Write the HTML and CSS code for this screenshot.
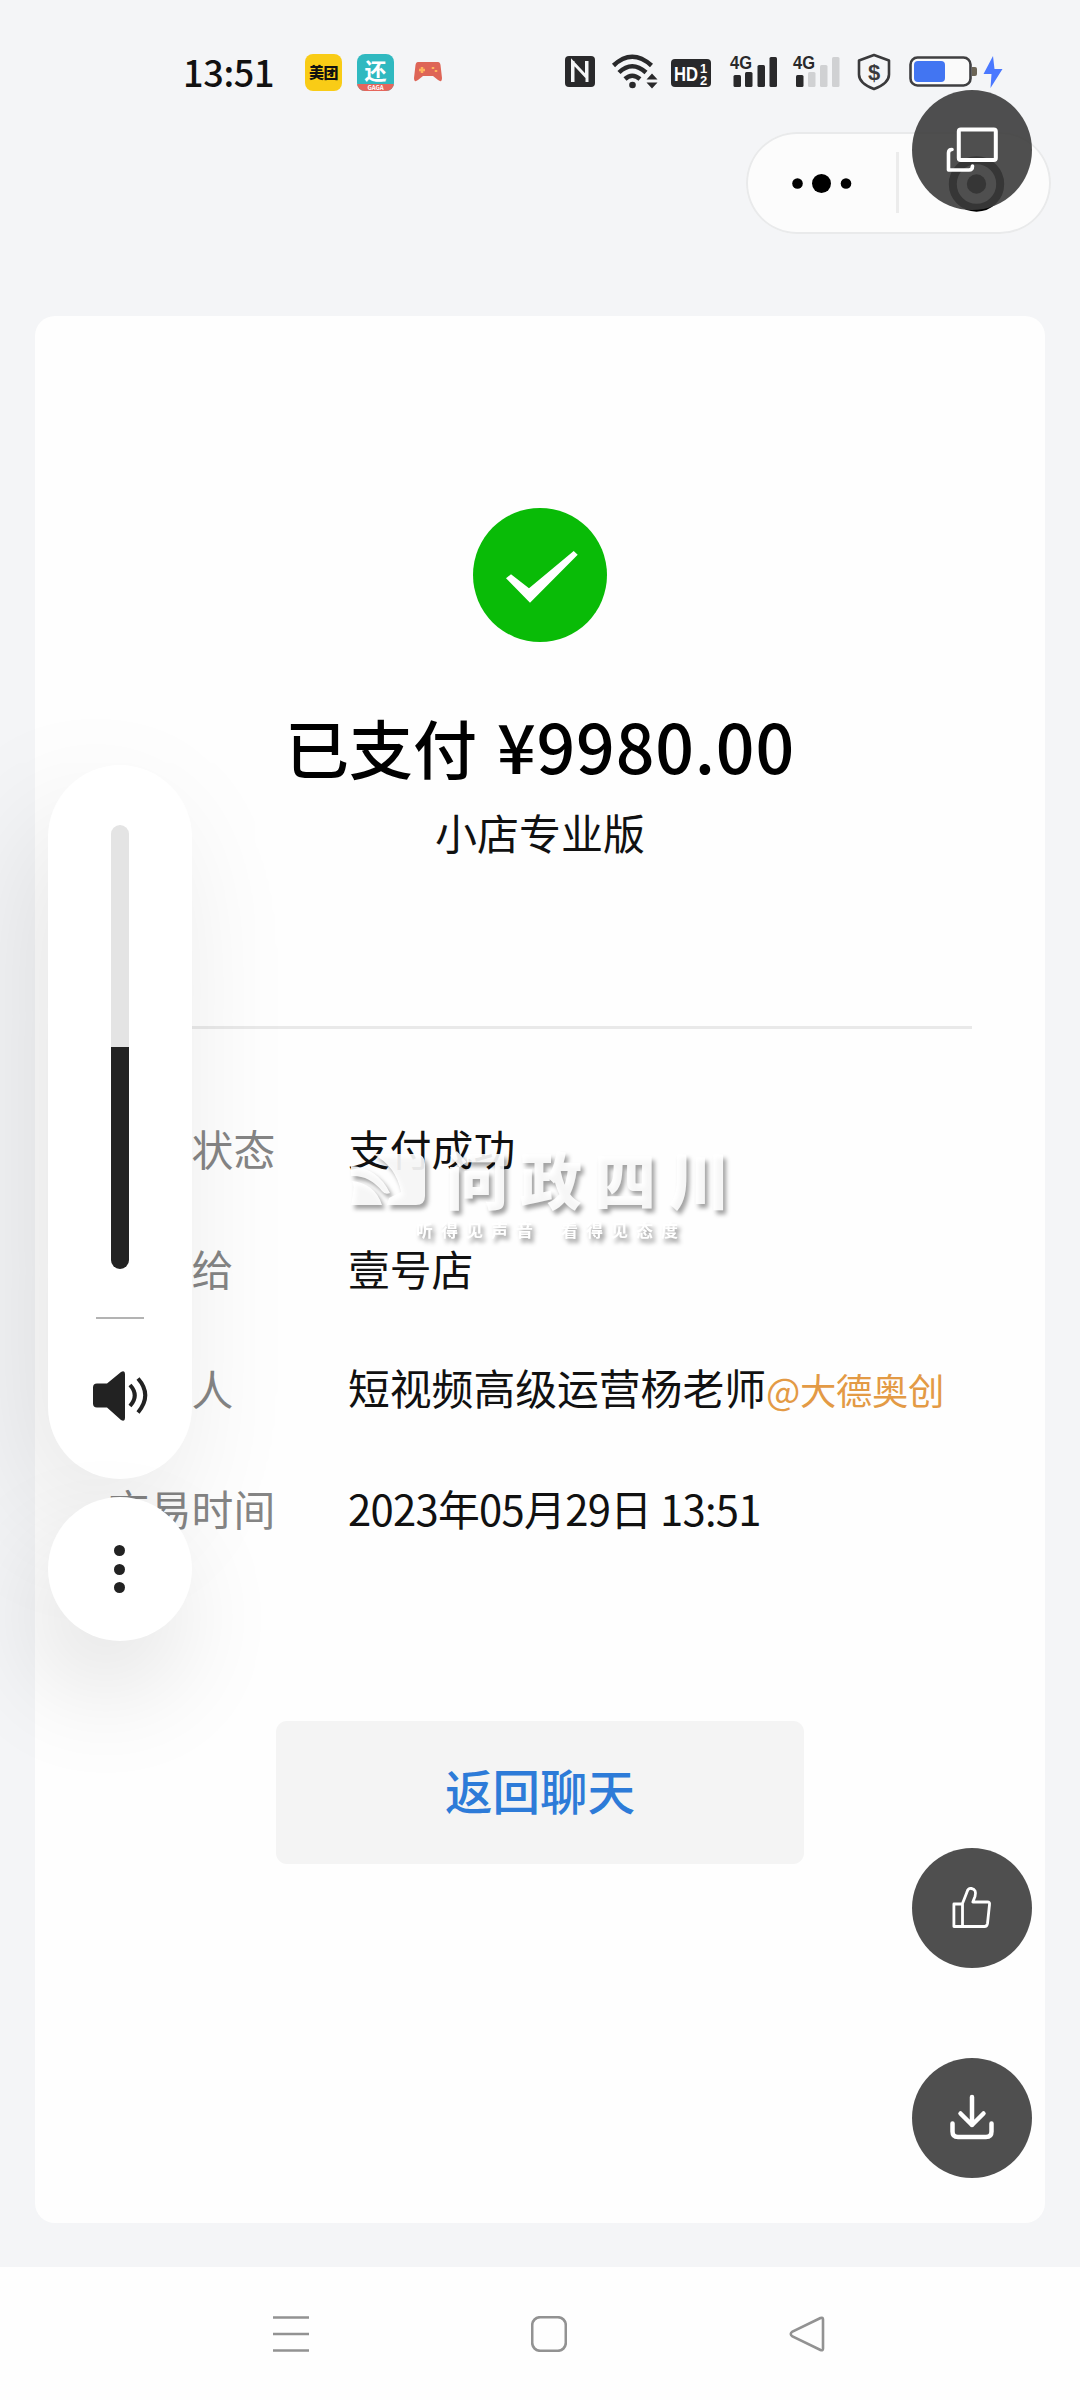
FILE: index.html
```html
<!DOCTYPE html>
<html lang="zh-CN">
<head>
<meta charset="utf-8">
<title>支付详情</title>
<link rel="stylesheet" href="styles.css">
</head>
<body>
<div class="screen">
  <header class="status">
    <span class="clock">13:51</span>
    <div class="apps">
      <span class="app app-yellow">美团</span>
      <span class="app app-teal"><b>还</b><i>GAGA</i></span>
      <svg class="pad" width="28" height="20" viewBox="0 0 28 20"><path d="M4 0h20q2 0 2.500 3L28 16q0 5-4 2l-5-4H9l-5 4q-4 3-4-2L1.500 3Q2 0 4 0Z" fill="#de6557"/><path d="M8 5v6M5 8h6M19 5v2M22 8v2" stroke="#ffb35c" stroke-width="2.500"/></svg>
    </div>
    <div class="sys">
      <svg width="440" height="40" viewBox="564 52 440 40">
        <rect x="565" y="56" width="30" height="31" rx="4" fill="#29292b"/>
        <path d="M572.500 82V62l14 15V61M587 82V61M573 82V61" fill="none" stroke="#f4f5f7" stroke-width="3"/>
        <g fill="none" stroke="#29292b" stroke-width="4.500"><path d="M613.500 65.500Q632 48 651.500 65.500"/><path d="M619 72.500Q632 60 646 72.500"/><path d="M625 79Q632 72.500 640 79"/></g>
        <circle cx="632.500" cy="85" r="3.300" fill="#29292b"/>
        <path d="M646.500 79.500l5.500-6 5.500 6zM646.500 82.500l5.500 6 5.500-6z" fill="#29292b"/>
        <rect x="671" y="59" width="40" height="28" rx="4" fill="#29292b"/>
        <text x="674" y="80.500" class="hd" textLength="24" lengthAdjust="spacingAndGlyphs">HD</text>
        <text x="700" y="72.500" class="hd-n">1</text><text x="700" y="84.500" class="hd-n">2</text>
        <text x="730" y="69" class="net" textLength="22" lengthAdjust="spacingAndGlyphs">4G</text>
        <g fill="#29292b"><rect x="733.500" y="75" width="7.500" height="12" rx="1.500"/><rect x="745" y="72" width="7.500" height="15" rx="1.500"/><rect x="757.500" y="65" width="7.500" height="22" rx="1.500"/><rect x="769.500" y="57" width="7.500" height="30" rx="1.500"/></g>
        <text x="793" y="69" class="net" textLength="22" lengthAdjust="spacingAndGlyphs">4G</text>
        <rect x="796" y="75" width="7.500" height="12" rx="1.500" fill="#29292b"/>
        <g fill="#d0d1d3"><rect x="808" y="72" width="7.500" height="15" rx="1.500"/><rect x="820" y="65" width="7.500" height="22" rx="1.500"/><rect x="832" y="57" width="7.500" height="30" rx="1.500"/></g>
        <path d="M874 55l15 5.500v14q0 9-15 14.500q-15-5.500-15-14.500v-14z" fill="none" stroke="#3a3a3c" stroke-width="2.600" stroke-linejoin="round"/>
        <text x="874" y="80" class="dollar" text-anchor="middle">$</text>
        <rect x="910.500" y="57.500" width="60" height="28" rx="7" fill="#fafafa" stroke="#3f3f41" stroke-width="2.600"/>
        <rect x="914" y="61" width="31" height="21" rx="4" fill="#4275f2"/>
        <path d="M972 67h3q2 0 2 2v5q0 2-2 2h-3z" fill="#6b6455"/>
        <path d="M993 56l-9.500 18h8l-1 14 12-19h-8z" fill="#4a78ff"/>
      </svg>
    </div>
  </header>
  <div class="topbar">
    <div class="capsule">
      <svg width="305" height="101" viewBox="746 132 305 101"><circle cx="797.500" cy="183.500" r="5.300"/><circle cx="821.500" cy="183.500" r="9.500"/><circle cx="846" cy="183.500" r="5.300"/><path d="M897.500 152v61" stroke="#ececec" stroke-width="3"/><circle cx="976.500" cy="184" r="23.700" fill="none" stroke="#000" stroke-width="8"/><circle cx="976.500" cy="184" r="9.700"/></svg>
    </div>
  </div>
  <main class="card">
    <svg class="ok" width="134" height="134" viewBox="473 508 134 134"><circle cx="540" cy="575" r="67" fill="#09bb07"/><path d="M506 578.300l5-4L529 588.300 573.700 551l4 3.700L530 602.700z" fill="#fff"/></svg>
    <h1 class="amount"><span>已支付</span><span class="num">¥9980.00</span></h1>
    <p class="product">小店专业版</p>
    <hr class="rule">
    <dl class="details">
      <div class="row"><dt class="tail">状态</dt><dd>支付成功</dd></div>
      <div class="row"><dt class="tail">给</dt><dd>壹号店</dd></div>
      <div class="row"><dt class="tail">人</dt><dd>短视频高级运营杨老师<span class="org">@大德奥创</span></dd></div>
      <div class="row"><dt>交易时间</dt><dd class="date">2023年05月29日 13:51</dd></div>
    </dl>
    <a class="back">返回聊天</a>
  </main>
  <nav class="nav">
    <svg width="36" height="36" viewBox="0 0 36 36"><path d="M0 1.500h36M0 18h36M0 34.500h36"/></svg>
    <svg width="36" height="36" viewBox="0 0 36 36"><rect x="1.200" y="1.200" width="33.600" height="33.600" rx="8"/></svg>
    <svg width="36" height="36" viewBox="0 0 36 36"><path d="M31.500 2L3.500 15.500q-3.500 2.500 0 5L31.500 34q2.500 1 2.500-1.500v-29Q34 1 31.500 2Z"/></svg>
  </nav>

  <div class="mark">
    <svg width="80" height="58" viewBox="0 0 80 58"><path d="M0 51Q5 27 0 27Q24 29 31 51ZM0 12Q27 14 39 39Q34 41 31 37Q18 21 0 22zM22 0H66Q74 1 74 10V42Q74 51 65 51H36L38 44L50 38Q45 12 22 0Z"/></svg>
    <div class="mark-name">问政四川</div>
    <div class="mark-sub"><span>听得见声音</span><span>看得见态度</span></div>
  </div>

  <div class="volume">
    <div class="track"><div class="level"></div></div>
    <div class="sep"></div>
    <svg width="56" height="50" viewBox="92 1371.500 56 50"><path d="M97 1384h10l14-11.500q4-2 4 2v44q0 4-4 2L107 1408H97q-4 0-4-4v-16q0-4 4-4Z" fill="#222"/><path d="M130 1385.500q9.500 10.500 0 21M138 1379q14.500 16.500 0 34" fill="none" stroke="#222" stroke-width="4"/></svg>
  </div>
  <div class="more"><i></i><i></i><i></i></div>

  <div class="fab fab-window"><svg width="56" height="50" viewBox="944 125 56 50"><rect x="958.800" y="129.500" width="37" height="30.500" rx="2"/><path d="M952 149.500q-3.500 0-3.500 3.500v17h20.500q3.500 0 3.500-4" stroke-width="3.600"/></svg></div>
  <div class="fab fab-like"><svg width="46" height="46" viewBox="949 1885 46 46" stroke-width="2.800"><path d="M962.500 1926.500h-8.600v-22.500h8.600zM962.500 1903.500l4.500-11.500q1-4 4.500-3.500 5.500 1 3.500 8l-2.200 5.500h14.700q2.500 0 2 2.500l-2 19q-.5 3-3 3h-22z"/></svg></div>
  <div class="fab fab-save"><svg width="50" height="50" viewBox="947 2093 50 50" stroke-width="4.500"><path d="M972 2097v28M960.500 2113.500l11.500 11.500 11.500-11.500M952.500 2123.500v8q0 5.500 5.500 5.500h28q5.500 0 5.500-5.500v-8"/></svg></div>
</div>
</body>
</html>
```
FILE: styles.css
```css
* { box-sizing: border-box; }
body { margin: 0; background: #f4f5f7; font-family: "Noto Sans CJK SC", sans-serif; color: #111; }
.screen { position: relative; width: 1080px; height: 2400px; overflow: hidden; display: flex; flex-direction: column; }

.status { height: 132px; padding: 52px 76px 0 183px; display: flex; align-items: flex-start; }
.clock { width: 122px; font-size: 36px; line-height: 38px; font-weight: 500; letter-spacing: -.3px; }
.apps { display: flex; align-items: center; gap: 15px; height: 40px; }
.app { width: 37px; height: 37px; border-radius: 8px; display: block; overflow: hidden; text-align: center; }
.app-yellow { background: #f9cc16; font-size: 15px; line-height: 35px; font-weight: 900; letter-spacing: -.5px; }
.app-teal { background: #30b9c0; color: #fff; display: flex; flex-direction: column; }
.app-teal b { font-size: 22px; line-height: 30px; height: 30px; }
.app-teal i { background: #e6665c; font-size: 6px; line-height: 7px; height: 7px; font-style: normal; font-weight: 700; }
.pad { margin-left: 5px; }
.sys { margin-left: auto; height: 40px; }
.sys svg { display: block; }
.hd { font: 700 20px "Liberation Sans", sans-serif; fill: #fff; }
.hd-n { font: 700 13px "Liberation Sans", sans-serif; fill: #fff; }
.net { font: 700 19px "Liberation Sans", sans-serif; fill: #29292b; }
.dollar { font: 700 22px "Liberation Sans", sans-serif; fill: #3a3a3c; }

.topbar { height: 184px; padding-right: 29px; display: flex; justify-content: flex-end; align-items: flex-start; }
.capsule { width: 305px; height: 102px; border-radius: 51px; background: #fcfcfc; box-shadow: inset 0 0 0 2px #e9eaeb; }
.capsule svg { display: block; }

.card { height: 1907px; margin: 0 35px; border-radius: 20px; background: #fefefe; display: flex; flex-direction: column; align-items: center; padding-top: 192px; }
.ok { flex: none; }
.amount { margin: 57px 0 0; height: 92px; display: flex; align-items: baseline; justify-content: center; gap: 20px; font-size: 64px; line-height: 92px; font-weight: 500; color: #000; white-space: nowrap; }
.num { font-size: 68px; letter-spacing: .8px; }
.product { margin: 11px 0 0; font-size: 42px; line-height: 60px; }
.rule { width: 863px; height: 3px; margin: 164px 0 0; border: 0; background: #e9e9e9; }
.details { width: 864px; margin: 59px 0 0; }
.row { display: flex; align-items: center; height: 120px; line-height: 120px; font-size: 41.800px; white-space: nowrap; }
.row dt { width: 240px; color: #858585; }
.row .tail { padding-left: 2em; }
.row dd { margin: 0; }
.org { font-size: 36.300px; color: #e39a45; letter-spacing: -.3px; }
.date { letter-spacing: -.7px; }
.back { width: 528px; height: 143px; margin-top: 153px; border-radius: 11px; background: #f4f4f4; color: #2d7bd8; font-size: 47.500px; line-height: 137px; font-weight: 500; text-align: center; }

.nav { height: 133px; margin-top: 44px; background: #fefefe; display: flex; justify-content: center; gap: 222px; padding: 49px 0 0 18px; }
.nav svg { fill: none; stroke: #929292; stroke-width: 2.600; }

.mark { position: absolute; left: 351px; top: 1154px; width: 390px; display: grid; grid-template-columns: 95px 1fr; color: #fff; filter: drop-shadow(3px 4px 2px rgba(0,0,0,.4)); }
.mark svg { fill: #fff; opacity: .9; }
.mark-name { font-size: 62px; line-height: 48px; font-weight: 900; letter-spacing: 12px; white-space: nowrap; opacity: .9; }
.mark-sub { grid-column: 1 / 3; display: flex; gap: 20px; padding-left: 65px; margin-top: 8px; font-size: 17px; line-height: 20px; font-weight: 700; letter-spacing: 8px; white-space: nowrap; }

.volume { position: absolute; left: 48px; top: 765px; width: 144px; height: 714px; border-radius: 72px; background: #fff; display: flex; flex-direction: column; align-items: center; padding-top: 60px; box-shadow: -24px 48px 130px rgba(0,0,0,.1); }
.track { width: 18px; height: 444px; border-radius: 9px; background: #e4e4e4; overflow: hidden; display: flex; align-items: flex-end; }
.level { width: 18px; height: 222px; background: #222; }
.sep { width: 48px; height: 2px; margin: 48px 0 52px; background: #b3b3b3; }
.more { position: absolute; left: 48px; top: 1497px; width: 144px; height: 144px; padding-right: 2px; border-radius: 50%; background: #fff; display: flex; flex-direction: column; align-items: center; justify-content: center; gap: 7.500px; box-shadow: -14px 48px 110px rgba(0,0,0,.12); }
.more i { width: 11px; height: 11px; border-radius: 50%; background: #222; }

.fab { position: absolute; left: 912px; width: 120px; height: 120px; border-radius: 50%; background: rgba(60,60,60,.9); display: flex; align-items: center; justify-content: center; }
.fab svg { fill: none; stroke: #fff; stroke-linecap: round; stroke-linejoin: round; }
.fab-window { top: 90px; }
.fab-window svg { stroke-width: 4; }
.fab-like { top: 1848px; }
.fab-save { top: 2058px; }
```
